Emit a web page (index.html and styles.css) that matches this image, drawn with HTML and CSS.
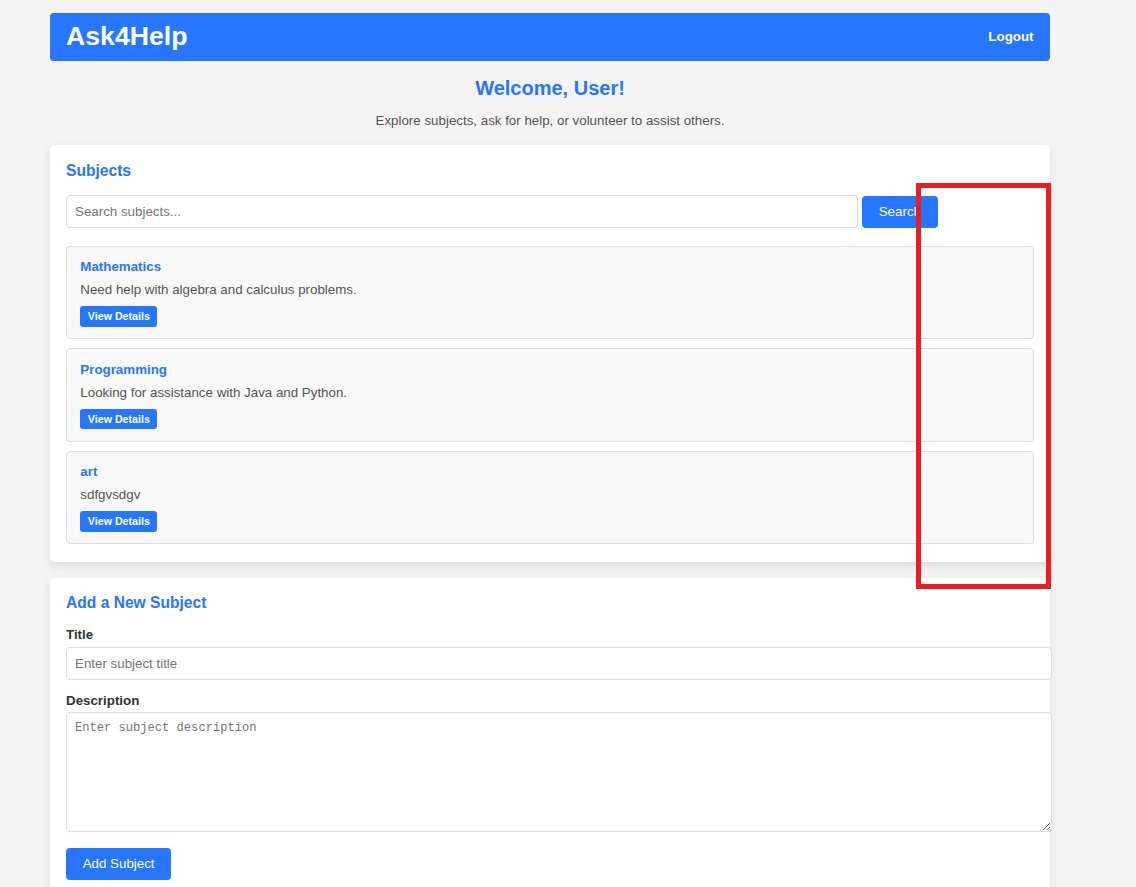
FILE: index.html
```html
<!DOCTYPE html>
<html lang="en">
<head>
<meta charset="utf-8">
<title>Ask4Help</title>
<link rel="stylesheet" href="styles.css">
</head>
<body>
<div class="page">
  <header class="topbar">
    <h1 class="brand">Ask4Help</h1>
    <a class="logout" href="#">Logout</a>
  </header>

  <section class="intro">
    <h2 class="welcome">Welcome, User!</h2>
    <p class="tagline">Explore subjects, ask for help, or volunteer to assist others.</p>
  </section>

  <section class="card">
    <h3 class="card-title">Subjects</h3>
    <div class="search-row">
      <input class="search-input" type="text" placeholder="Search subjects...">
      <button class="btn" type="button">Search</button>
    </div>
    <div class="subject-list">
      <div class="subject">
        <h4 class="subject-title">Mathematics</h4>
        <p class="subject-desc">Need help with algebra and calculus problems.</p>
        <button class="btn btn-small" type="button">View Details</button>
      </div>
      <div class="subject">
        <h4 class="subject-title">Programming</h4>
        <p class="subject-desc">Looking for assistance with Java and Python.</p>
        <button class="btn btn-small" type="button">View Details</button>
      </div>
      <div class="subject">
        <h4 class="subject-title">art</h4>
        <p class="subject-desc">sdfgvsdgv</p>
        <button class="btn btn-small" type="button">View Details</button>
      </div>
    </div>
  </section>

  <section class="card">
    <h3 class="card-title form-title">Add a New Subject</h3>
    <form class="subject-form">
      <label class="field-label" for="title">Title</label>
      <input class="field-input" id="title" type="text" placeholder="Enter subject title">
      <label class="field-label" for="desc">Description</label>
      <textarea class="field-textarea" id="desc" placeholder="Enter subject description"></textarea>
      <button class="btn" type="button">Add Subject</button>
    </form>
  </section>
</div>
<div class="annotation"></div>
</body>
</html>
```

FILE: styles.css
```css
html {
  scrollbar-width: none;
}

body {
  margin: 0;
  background: #f4f4f4;
  font-family: "Liberation Sans", Arial, sans-serif;
  font-size: 13.33px;
  color: #333;
  position: relative;
}

.page {
  width: 1000px;
  margin-left: 50px;
  padding-top: 13px;
}

.topbar {
  display: flex;
  align-items: center;
  justify-content: space-between;
  background: #2776ff;
  color: #fff;
  border-radius: 4px;
  padding: 8.33px 16.5px 8.33px 16px;
}

.brand {
  margin: 0;
  font-size: 26.67px;
  font-weight: bold;
}

.logout {
  color: #fff;
  font-weight: bold;
  text-decoration: none;
  font-size: 13.33px;
}

.intro {
  text-align: center;
}

.welcome {
  margin: 16.6px 0 13px;
  font-size: 20px;
  color: #2776ff;
}

.tagline {
  margin: 0 0 16.67px;
  color: #555;
}

.card {
  background: #fff;
  border-radius: 5px;
  padding: 16.67px 16px 17.7px;
  box-shadow: 0 4px 10px rgba(0, 0, 0, 0.1);
  margin-bottom: 16px;
}

.card-title {
  margin: 0 0 15.6px;
  font-size: 15.6px;
  color: #2776ff;
}

.form-title {
  margin-bottom: 15.2px;
}

.search-row {
  display: flex;
  align-items: center;
  gap: 3.7px;
  margin-bottom: 17.5px;
}

.search-input,
.field-input {
  box-sizing: content-box;
  padding: 8px;
  border: 1px solid #ddd;
  border-radius: 4px;
  font-family: "Liberation Sans", Arial, sans-serif;
  font-size: 13.33px;
  color: #333;
  line-height: 15.33px;
  background: #fff;
}

.search-input {
  width: 80%;
}

.btn {
  background: #2776ff;
  color: #fff;
  border: 0;
  border-radius: 4px;
  padding: 8.33px 16.67px;
  font-family: "Liberation Sans", Arial, sans-serif;
  font-size: 13.33px;
  line-height: 15.33px;
  cursor: pointer;
}

.subject-list {
  display: flex;
  flex-direction: column;
  gap: 9.2px;
}

.subject {
  display: flex;
  flex-direction: column;
  align-items: flex-start;
  background: #f8f8f8;
  border: 1px solid #ddd;
  border-radius: 4px;
  padding: 12.5px 13.33px 11.4px;
}

.subject-title {
  margin: 0 0 8px;
  font-size: 13.33px;
  color: #2776ff;
}

.subject-desc {
  margin: 0 0 9px;
  color: #555;
}

.btn-small {
  font-size: 10.67px;
  font-weight: bold;
  line-height: 12.3px;
  padding: 4px 7.5px;
  border-radius: 3px;
}

.subject-form {
  display: flex;
  flex-direction: column;
  align-items: flex-start;
}

.field-label {
  font-weight: bold;
  color: #333;
  margin-bottom: 4.17px;
}

.field-input {
  width: 100%;
  margin: 0 0 13px;
}

.field-textarea {
  box-sizing: content-box;
  width: 100%;
  height: 101.5px;
  padding: 8px;
  border: 1px solid #ddd;
  border-radius: 4px;
  margin: 0 0 16px;
  font-family: "Liberation Mono", Consolas, monospace;
  font-size: 12.1px;
  color: #333;
  background: #fff;
}

.annotation {
  position: absolute;
  left: 915.5px;
  top: 183.3px;
  width: 125px;
  height: 396px;
  border: 5px solid #e81e24;
  pointer-events: none;
}
```
